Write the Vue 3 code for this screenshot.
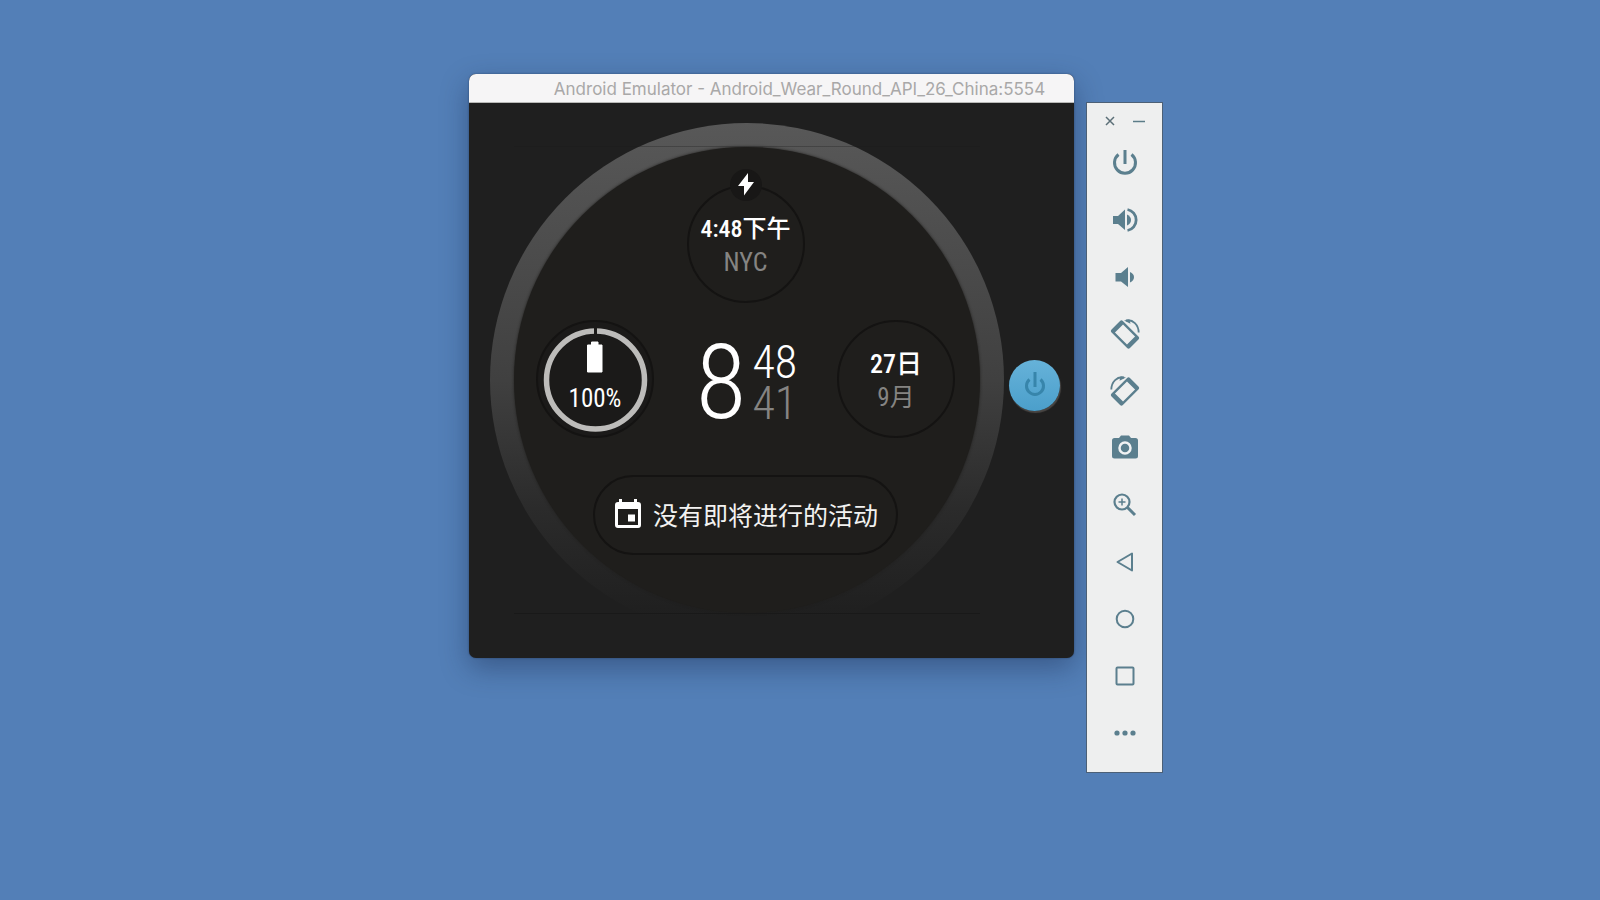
<script setup>
const tools = [
  { id: 'power', label: 'Power' },
  { id: 'volume-up', label: 'Volume up' },
  { id: 'volume-down', label: 'Volume down' },
  { id: 'rotate-left', label: 'Rotate left' },
  { id: 'rotate-right', label: 'Rotate right' },
  { id: 'camera', label: 'Take screenshot' },
  { id: 'zoom', label: 'Zoom mode' },
  { id: 'back', label: 'Back' },
  { id: 'home', label: 'Home' },
  { id: 'overview', label: 'Overview' },
  { id: 'more', label: 'More' },
]
</script>

<template>
  <main class="desktop">
    <section class="window">
      <header class="titlebar">Android Emulator - Android_Wear_Round_API_26_China:5554</header>
      <div class="device">
        <div class="bezel">
          <div class="face">
            <div class="comp city">
              <svg class="bolt" viewBox="0 0 32 32" aria-hidden="true">
                <circle cx="16" cy="16" r="16" fill="#181716" />
                <path d="M18 4 L8 17 H14 L14 26.500 L24 13 H18 Z" fill="#fff" />
              </svg>
              <span class="main">4:48下午</span>
              <span class="sub">NYC</span>
            </div>
            <div class="middle">
              <div class="comp battery">
                <svg class="gauge" viewBox="0 0 118 118" aria-hidden="true">
                  <circle cx="59.500" cy="60" r="49" fill="none" stroke="#bdbcba" stroke-width="5.500" />
                  <path d="M59.500 7 V15" stroke="#1b1a19" stroke-width="3" />
                  <path d="M51.500 25 H55.500 V22 H62 V25 H66 V52 H51.500 Z" fill="#fff" stroke="#fff" stroke-linejoin="round" />
                </svg>
                <span class="main">100%</span>
              </div>
              <div class="clock">
                <span class="hour">8</span>
                <div class="stack">
                  <span>48</span>
                  <span class="seconds">41</span>
                </div>
              </div>
              <div class="comp date">
                <span class="main">27日</span>
                <span class="sub">9月</span>
              </div>
            </div>
            <div class="event">
              <svg viewBox="0 0 26 29" aria-hidden="true">
                <path fill="#fff" fill-rule="evenodd" d="M4 0 H7 V3 H19 V0 H22 V3 H23 Q26 3 26 6 V26 Q26 29 23 29 H3 Q0 29 0 26 V6 Q0 3 3 3 H4 Z M3 10 V26 H23 V10 Z M13 15.500 H20 V22.500 H13 Z" />
              </svg>
              <span>没有即将进行的活动</span>
            </div>
          </div>
        </div>
        <button class="side-button" type="button" aria-label="Side button">
          <svg viewBox="0 0 24 28" fill="none" stroke="#3785ab" stroke-width="3">
            <path d="M12 1 V16" />
            <path d="M6.500 8.500 A8.500 8.500 0 1 0 17.500 8.500" />
          </svg>
        </button>
      </div>
    </section>

    <aside class="toolbar">
      <div class="controls">
        <button type="button" aria-label="Close">
          <svg viewBox="0 0 12 12"><path d="M2 2 L10 10 M10 2 L2 10" stroke="#5b6f77" stroke-width="1.500" /></svg>
        </button>
        <button type="button" aria-label="Minimize">
          <svg viewBox="0 0 12 12"><path d="M0 6.500 H12" stroke="#5b7c88" stroke-width="1.500" /></svg>
        </button>
      </div>
      <button v-for="tool in tools" :key="tool.id" class="tool" type="button" :aria-label="tool.label">
        <svg v-if="tool.id === 'power'" viewBox="0 0 30 30" fill="none" stroke="#5b7f8e" stroke-width="3">
          <path d="M15 2 V16" />
          <path d="M8.500 6.500 A10.500 10.500 0 1 0 21.500 6.500" />
        </svg>
        <svg v-else-if="tool.id === 'volume-up'" viewBox="0 0 30 30" fill="#5b7f8e">
          <path d="M3 11 H8 L15 4.500 V25 L8 19 H3 Z" />
          <path d="M17 9.500 Q21 11.500 21 15 Q21 18.500 17 20.500 Z" />
          <path d="M17.500 4.500 A10.700 10.700 0 0 1 17.500 25.500" fill="none" stroke="#5b7f8e" stroke-width="2.800" />
        </svg>
        <svg v-else-if="tool.id === 'volume-down'" viewBox="0 0 30 30" fill="#5b7f8e">
          <path d="M5.500 11 H11 L18 5 V25 L11 19.500 H5.500 Z" />
          <path d="M20 10 Q24 12 24 15 Q24 18.500 20 20.500 Z" />
        </svg>
        <svg v-else-if="tool.id === 'rotate-left' || tool.id === 'rotate-right'" viewBox="0 0 30 30" :class="{ mirrored: tool.id === 'rotate-right' }">
          <path transform="rotate(45 15 15.5)" fill="#5b7f8e" fill-rule="evenodd" d="M4 7.500 H26 Q28 7.500 28 9.500 V21.500 Q28 23.500 26 23.500 H4 Q2 23.500 2 21.500 V9.500 Q2 7.500 4 7.500 Z M6.500 9.800 V21.200 H23.500 V9.800 Z" />
          <path d="M16 1.500 C23 0 28.500 6 28.700 13.500" fill="none" stroke="#5b7f8e" stroke-width="1.800" />
          <path d="M14 1.500 L19.500 0.500 L20.500 4.800 Z" fill="#5b7f8e" />
        </svg>
        <svg v-else-if="tool.id === 'camera'" viewBox="0 0 30 30">
          <path fill="#5b7f8e" d="M4.500 5 H9 L11 2.500 H19 L21 5 H25.500 Q28 5 28 7.500 V23 Q28 25.500 25.500 25.500 H4.500 Q2 25.500 2 23 V7.500 Q2 5 4.500 5 Z" />
          <circle cx="15" cy="15" r="5.500" fill="none" stroke="#f0f2f3" stroke-width="2.500" />
        </svg>
        <svg v-else-if="tool.id === 'zoom'" viewBox="0 0 30 30" fill="none" stroke="#5b7f8e">
          <circle cx="12" cy="12" r="7.500" stroke-width="2.200" />
          <path d="M17.500 17.500 L25 25" stroke-width="3" />
          <path d="M12 8.500 V15.500 M8.500 12 H15.500" stroke-width="1.500" />
        </svg>
        <svg v-else-if="tool.id === 'back'" viewBox="0 0 30 30" fill="none" stroke="#5b7f8e" stroke-width="2" stroke-linejoin="round">
          <path d="M7.500 15 L22 6.500 V23.500 Z" />
        </svg>
        <svg v-else-if="tool.id === 'home'" viewBox="0 0 30 30" fill="none" stroke="#5b7f8e" stroke-width="2">
          <circle cx="15" cy="15" r="8.300" />
        </svg>
        <svg v-else-if="tool.id === 'overview'" viewBox="0 0 30 30" fill="none" stroke="#5b7f8e" stroke-width="2">
          <rect x="6.500" y="6.500" width="17" height="17" rx="1" />
        </svg>
        <svg v-else viewBox="0 0 30 30" fill="#5b7f8e">
          <circle cx="7" cy="15" r="2.600" /><circle cx="15" cy="15" r="2.600" /><circle cx="23" cy="15" r="2.600" />
        </svg>
      </button>
    </aside>
  </main>
</template>

<style>
body {
  background: #537fb7;
}
</style>

<style scoped>
.desktop {
  display: flex;
  justify-content: center;
  align-items: flex-start;
  gap: 12px;
  box-sizing: border-box;
  min-height: 100vh;
  padding: 74px 0 40px 32px;
  background: #537fb7;
  font-family: "Roboto Condensed", "Liberation Sans Narrow", "Noto Sans CJK SC", sans-serif;
}

button {
  display: flex;
  align-items: center;
  justify-content: center;
  padding: 0;
  border: 0;
  background: none;
}

.window {
  border-radius: 7px;
  background: #1f1f1f;
  box-shadow: 0 10px 28px rgba(20, 35, 70, 0.4), 0 0 2px rgba(20, 30, 50, 0.5);
}

.titlebar {
  box-sizing: border-box;
  height: 29px;
  padding-left: 56px;
  border-bottom: 1px solid #b9b9b7;
  border-radius: 7px 7px 0 0;
  background: #f6f5f6;
  color: #a9a8a8;
  font-family: Inter, sans-serif;
  font-size: 17px;
  line-height: 30px;
  text-align: center;
  white-space: nowrap;
}

.device {
  display: flex;
  align-items: center;
  gap: 5px;
  padding: 20px 14px 21px 21px;
}

.bezel {
  position: relative;
  padding: 24px;
  border-radius: 50%;
  background: linear-gradient(#585858, #4c4c4c 25%, #404040 50%, #2b2b2b 75%, #1f1f1f 96%);
}

.bezel::before {
  content: "";
  position: absolute;
  inset: 23px 24px;
  border-top: 1px solid rgba(28, 28, 28, 0.3);
  border-bottom: 1px solid #191919;
}

.face {
  display: flex;
  flex-direction: column;
  align-items: center;
  box-sizing: border-box;
  width: 466px;
  height: 466px;
  padding: 38px 25px 0 22px;
  border-radius: 50%;
  background: #1f1e1c;
  box-shadow: 0 0 3px #1f1e1c;
  color: #fff;
}

.comp {
  position: relative;
  display: flex;
  flex-direction: column;
  align-items: center;
  box-sizing: border-box;
  width: 118px;
  height: 118px;
  border: 2px solid #141312;
  border-radius: 50%;
  font-size: 25px;
  line-height: 33px;
  white-space: nowrap;
}

.sub {
  color: #858482;
}

.city {
  padding-top: 26px;
}

.city .main {
  font-size: 24px;
  font-weight: 500;
}

.city .sub {
  font-size: 26px;
}

.bolt {
  position: absolute;
  top: -18px;
  width: 32px;
  height: 32px;
}

.middle {
  display: flex;
  justify-content: space-between;
  align-items: center;
  align-self: stretch;
  margin-top: 17px;
}

.battery {
  padding-top: 60px;
  background: #1b1a19;
}

.gauge {
  position: absolute;
  inset: -2px;
}

.date {
  padding-top: 26px;
}

.date .main {
  font-size: 26px;
  font-weight: 500;
}

.clock {
  display: flex;
  align-items: center;
  gap: 6px;
  padding: 8px 0 0 2px;
  font-weight: 300;
}

.hour {
  font-size: 104px;
  line-height: 80px;
}

.stack {
  display: flex;
  flex-direction: column;
  font-size: 46px;
  line-height: 41px;
}

.seconds {
  color: #858482;
}

.event {
  display: flex;
  align-items: center;
  gap: 12px;
  box-sizing: border-box;
  height: 80px;
  margin-top: 37px;
  padding: 0 18px 3px 20px;
  border: 2px solid #141312;
  border-radius: 40px;
  color: #f2f2f1;
  font-size: 25px;
  white-space: nowrap;
}

.event svg {
  width: 26px;
  height: 29px;
}

.side-button {
  width: 51px;
  height: 51px;
  margin-top: 10px;
  border-radius: 50%;
  background: linear-gradient(#66b2d9, #4b9fcb);
  box-shadow: 1px 2px 1px #4a4745;
}

.side-button svg {
  width: 24px;
  height: 28px;
}

.toolbar {
  box-sizing: border-box;
  width: 77px;
  margin-top: 28px;
  padding: 5px 0 11px;
  border: 1px solid #4c6076;
  background: #eeefef;
}

.controls {
  display: flex;
  justify-content: center;
  gap: 17px;
  height: 26px;
}

.controls svg {
  width: 12px;
  height: 12px;
}

.tool {
  width: 100%;
  height: 57px;
}

.tool svg {
  width: 30px;
  height: 30px;
}

.mirrored {
  transform: scaleX(-1);
}
</style>
